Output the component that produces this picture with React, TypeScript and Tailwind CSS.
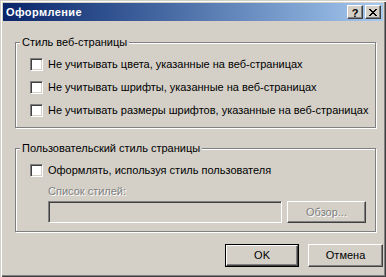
import React from "react";

const Check = ({ label }: { label: string }) => (
  <div className="flex items-center h-[13px]">
    <span className="w-[13px] h-[13px] shrink-0 bg-white border border-t-[#808080] border-l-[#808080] border-b-white border-r-white shadow-[inset_1px_1px_0_#404040,inset_-1px_-1px_0_#D4D0C8]" />
    <span className="ml-[5px] leading-[13px] whitespace-nowrap">{label}</span>
  </div>
);

const Group = ({
  title,
  className,
  children,
}: {
  title: string;
  className: string;
  children: React.ReactNode;
}) => (
  <div className={`relative border border-[#808080] shadow-[inset_1px_1px_0_#fff,1px_1px_0_#fff] ${className}`}>
    <span className="absolute left-[4px] top-[-7px] px-[2px] bg-[#D4D0C8] leading-[13px] whitespace-nowrap">{title}</span>
    {children}
  </div>
);

const Button = ({ label, def, disabled, className }: { label: string; def?: boolean; disabled?: boolean; className: string }) => (
  <div className={`${def ? "border border-black" : ""} ${className}`}>
    <div className="w-full h-full flex items-center justify-center border border-t-white border-l-white border-b-[#404040] border-r-[#404040] shadow-[inset_-1px_-1px_0_#808080]">
      <span className={disabled ? "text-[#808080] [text-shadow:1px_1px_0_#fff]" : ""}>{label}</span>
    </div>
  </div>
);

const TitleBtn = ({ children }: { children: React.ReactNode }) => (
  <div className="w-[16px] h-[14px] bg-[#D4D0C8] flex items-center justify-center border border-t-white border-l-white border-b-[#404040] border-r-[#404040] shadow-[inset_-1px_-1px_0_#808080]">
    {children}
  </div>
);

export default function App() {
  return (
    <div className="w-[386px] h-[277px] bg-[#D4D0C8] p-[3px] flex flex-col text-[11px] text-black font-['Liberation_Sans',Arial,sans-serif] shadow-[inset_1px_1px_0_#D4D0C8,inset_2px_2px_0_#fff,inset_-1px_-1px_0_#404040,inset_-2px_-2px_0_#808080] select-none">
      <div className="h-[18px] shrink-0 flex items-center pl-[3px] pr-[2px] bg-gradient-to-r from-[#0A246A] to-[#A6CAF0]">
        <span className="font-bold text-white leading-[13px] tracking-[0.4px]">Оформление</span>
        <div className="ml-auto flex">
          <TitleBtn>
            <span className="font-bold text-[11px] leading-[10px] mt-[1px]">?</span>
          </TitleBtn>
          <div className="ml-[2px]">
            <TitleBtn>
              <svg width="8" height="7" viewBox="0 0 8 7" shapeRendering="crispEdges">
                <path d="M0 0h2v1h-2zM6 0h2v1h-2zM1 1h2v1h-2zM5 1h2v1h-2zM2 2h4v1h-4zM3 3h2v1h-2zM2 4h4v1h-4zM1 5h2v1h-2zM5 5h2v1h-2zM0 6h2v1h-2zM6 6h2v1h-2z" fill="#000" />
              </svg>
            </TitleBtn>
          </div>
        </div>
      </div>

      <div className="flex-1 flex flex-col pl-[12px]">
        <Group title="Стиль веб-страницы" className="mt-[21px] w-[361px] h-[86px] pl-[14px] pt-[15px] flex flex-col gap-[10px]">
          <Check label="Не учитывать цвета, указанные на веб-страницах" />
          <Check label="Не учитывать шрифты, указанные на веб-страницах" />
          <Check label="Не учитывать размеры шрифтов, указанные на веб-страницах" />
        </Group>

        <Group title="Пользовательский стиль страницы" className="mt-[20px] w-[361px] h-[84px] pl-[14px] pt-[15px] flex flex-col">
          <Check label="Оформлять, используя стиль пользователя" />
          <div className="ml-[18px] mt-[8px] leading-[13px] text-[#808080] [text-shadow:1px_1px_0_#fff]">Список стилей:</div>
          <div className="ml-[18px] mt-[3px] flex">
            <div className="w-[234px] h-[22px] bg-[#D4D0C8] border border-t-[#808080] border-l-[#808080] border-b-white border-r-white shadow-[inset_1px_1px_0_#404040,inset_-1px_-1px_0_#D4D0C8]" />
            <Button label="Обзор..." disabled className="ml-[5px] w-[79px] h-[22px]" />
          </div>
        </Group>

        <div className="mt-[12px] flex gap-[9px] pl-[210px]">
          <Button label="OK" def className="w-[77px] h-[23px]" />
          <Button label="Отмена" className="w-[78px] h-[23px]" />
        </div>
      </div>
    </div>
  );
}
